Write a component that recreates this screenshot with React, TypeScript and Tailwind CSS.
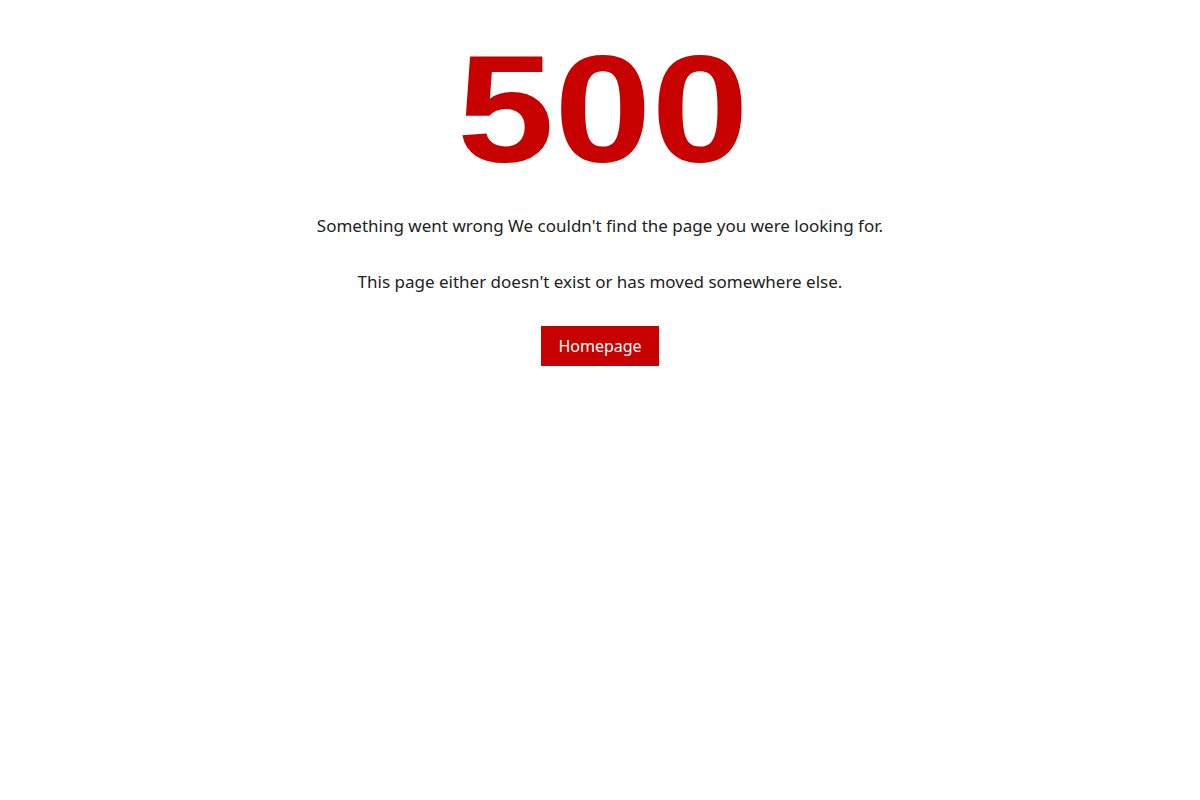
import React from "react";

export default function App() {
  return (
    <div className="min-h-screen bg-white flex flex-col items-center text-center font-['Noto_Sans',sans-serif] text-[#222222]">
      {/* Big error code */}
      <h1 className="mt-[24px] ml-[6px] scale-x-[1.15] text-[152px] leading-[170px] font-bold tracking-normal text-[#c70000] font-['Liberation_Sans',Arial,sans-serif]">
        500
      </h1>

      <p className="mt-[20px] text-[17px] leading-[24px]">
        Something went wrong We couldn't find the page you were looking for.
      </p>
      <p className="mt-[32px] text-[17px] leading-[24px]">
        This page either doesn't exist or has moved somewhere else.
      </p>

      <button className="mt-[32px] h-[40px] px-[17px] bg-[#c70000] text-white text-[16px] leading-[24px]">
        Homepage
      </button>
    </div>
  );
}
